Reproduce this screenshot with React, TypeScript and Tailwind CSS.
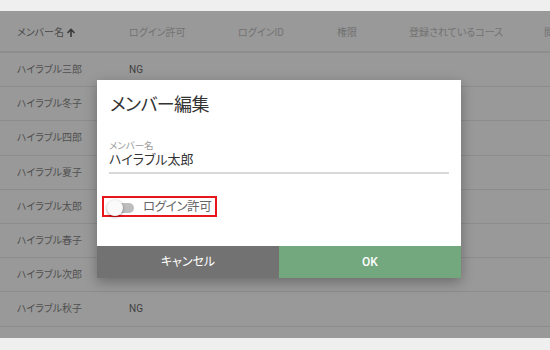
import React from "react";

const rows = [
  "ハイラブル三郎",
  "ハイラブル冬子",
  "ハイラブル四郎",
  "ハイラブル夏子",
  "ハイラブル太郎",
  "ハイラブル春子",
  "ハイラブル次郎",
  "ハイラブル秋子",
];

export default function App() {
  return (
    <div
      className="h-[350px] w-[550px] overflow-hidden bg-[#efefef] flex flex-col [font-feature-settings:'palt']"
      style={{ fontFamily: 'Roboto, "Noto Sans CJK JP", sans-serif' }}
    >
      <div className="h-[11px] shrink-0" />
      <div className="relative h-[327px] shrink-0 bg-[#999999] overflow-hidden">
        <div className="flex h-[42px] items-center pt-[3px] border-b-2 border-[#8e8e8e] text-[10px] text-[#727272] whitespace-nowrap">
          <div className="w-[129px] shrink-0 pl-[17px] text-[#4a4a4a] flex items-center gap-[1px]">
            メンバー名
            <svg width="10" height="10" viewBox="0 0 10 10" className="ml-[1px]">
              <path d="M5 9V1.5M1.5 5L5 1.5L8.5 5" stroke="#3a3a3a" strokeWidth="1.6" fill="none" />
            </svg>
          </div>
          <div className="w-[109px] shrink-0">ログイン許可</div>
          <div className="w-[99px] shrink-0">ログインID</div>
          <div className="w-[72px] shrink-0">権限</div>
          <div className="w-[135px] shrink-0">登録されているコース</div>
          <div className="w-[80px] shrink-0">閲覧</div>
        </div>
        {rows.map((name) => (
          <div
            key={name}
            className="flex h-[34.2px] items-center border-b border-[#8c8c8c] text-[10px] text-[#505050] whitespace-nowrap"
          >
            <div className="w-[129px] shrink-0 pl-[17px]">{name}</div>
            <div className="w-[109px] shrink-0 text-[#404040]">NG</div>
          </div>
        ))}

        <div className="absolute left-[97px] top-[69px] w-[364px] bg-white shadow-[0_4px_12px_rgba(0,0,0,0.3)] flex flex-col">
          <div className="px-[13px] pt-[12px] text-[18px] leading-[26px] tracking-[-0.6px] text-[#333]">メンバー編集</div>
          <div className="px-[12px] pt-[22px]">
            <div className="text-[9.5px] leading-[12px] text-[#9a9a9a]">メンバー名</div>
            <div className="text-[13px] leading-[16px] text-[#333]">ハイラブル太郎</div>
            <div className="mt-[4px] h-[2px] bg-[#d8d8d8]" />
          </div>
          <div className="px-[5px] pt-[22px] pb-[29px]">
            <div className="flex h-[21px] w-[115px] items-center gap-[9px] border-2 border-[#e8161b] pl-[5px] whitespace-nowrap">
              <div className="relative mt-[2px] h-[10px] w-[25px] shrink-0 rounded-full bg-[#bdbdbd]">
                <div className="absolute -left-[2px] -top-[3px] h-[16px] w-[16px] rounded-full bg-[#fafafa] shadow-[0_1px_3px_rgba(0,0,0,0.4)]" />
              </div>
              <span className="text-[12.5px] leading-[16px] tracking-[-0.4px] text-[#666]">ログイン許可</span>
            </div>
          </div>
          <div className="flex h-[32px] text-[12px] text-white">
            <div className="flex w-[182px] items-center justify-center bg-[#727272] font-normal">キャンセル</div>
            <div className="flex w-[182px] items-center justify-center bg-[#73a77d] font-medium">OK</div>
          </div>
        </div>
      </div>
      <div className="flex-1" />
    </div>
  );
}
